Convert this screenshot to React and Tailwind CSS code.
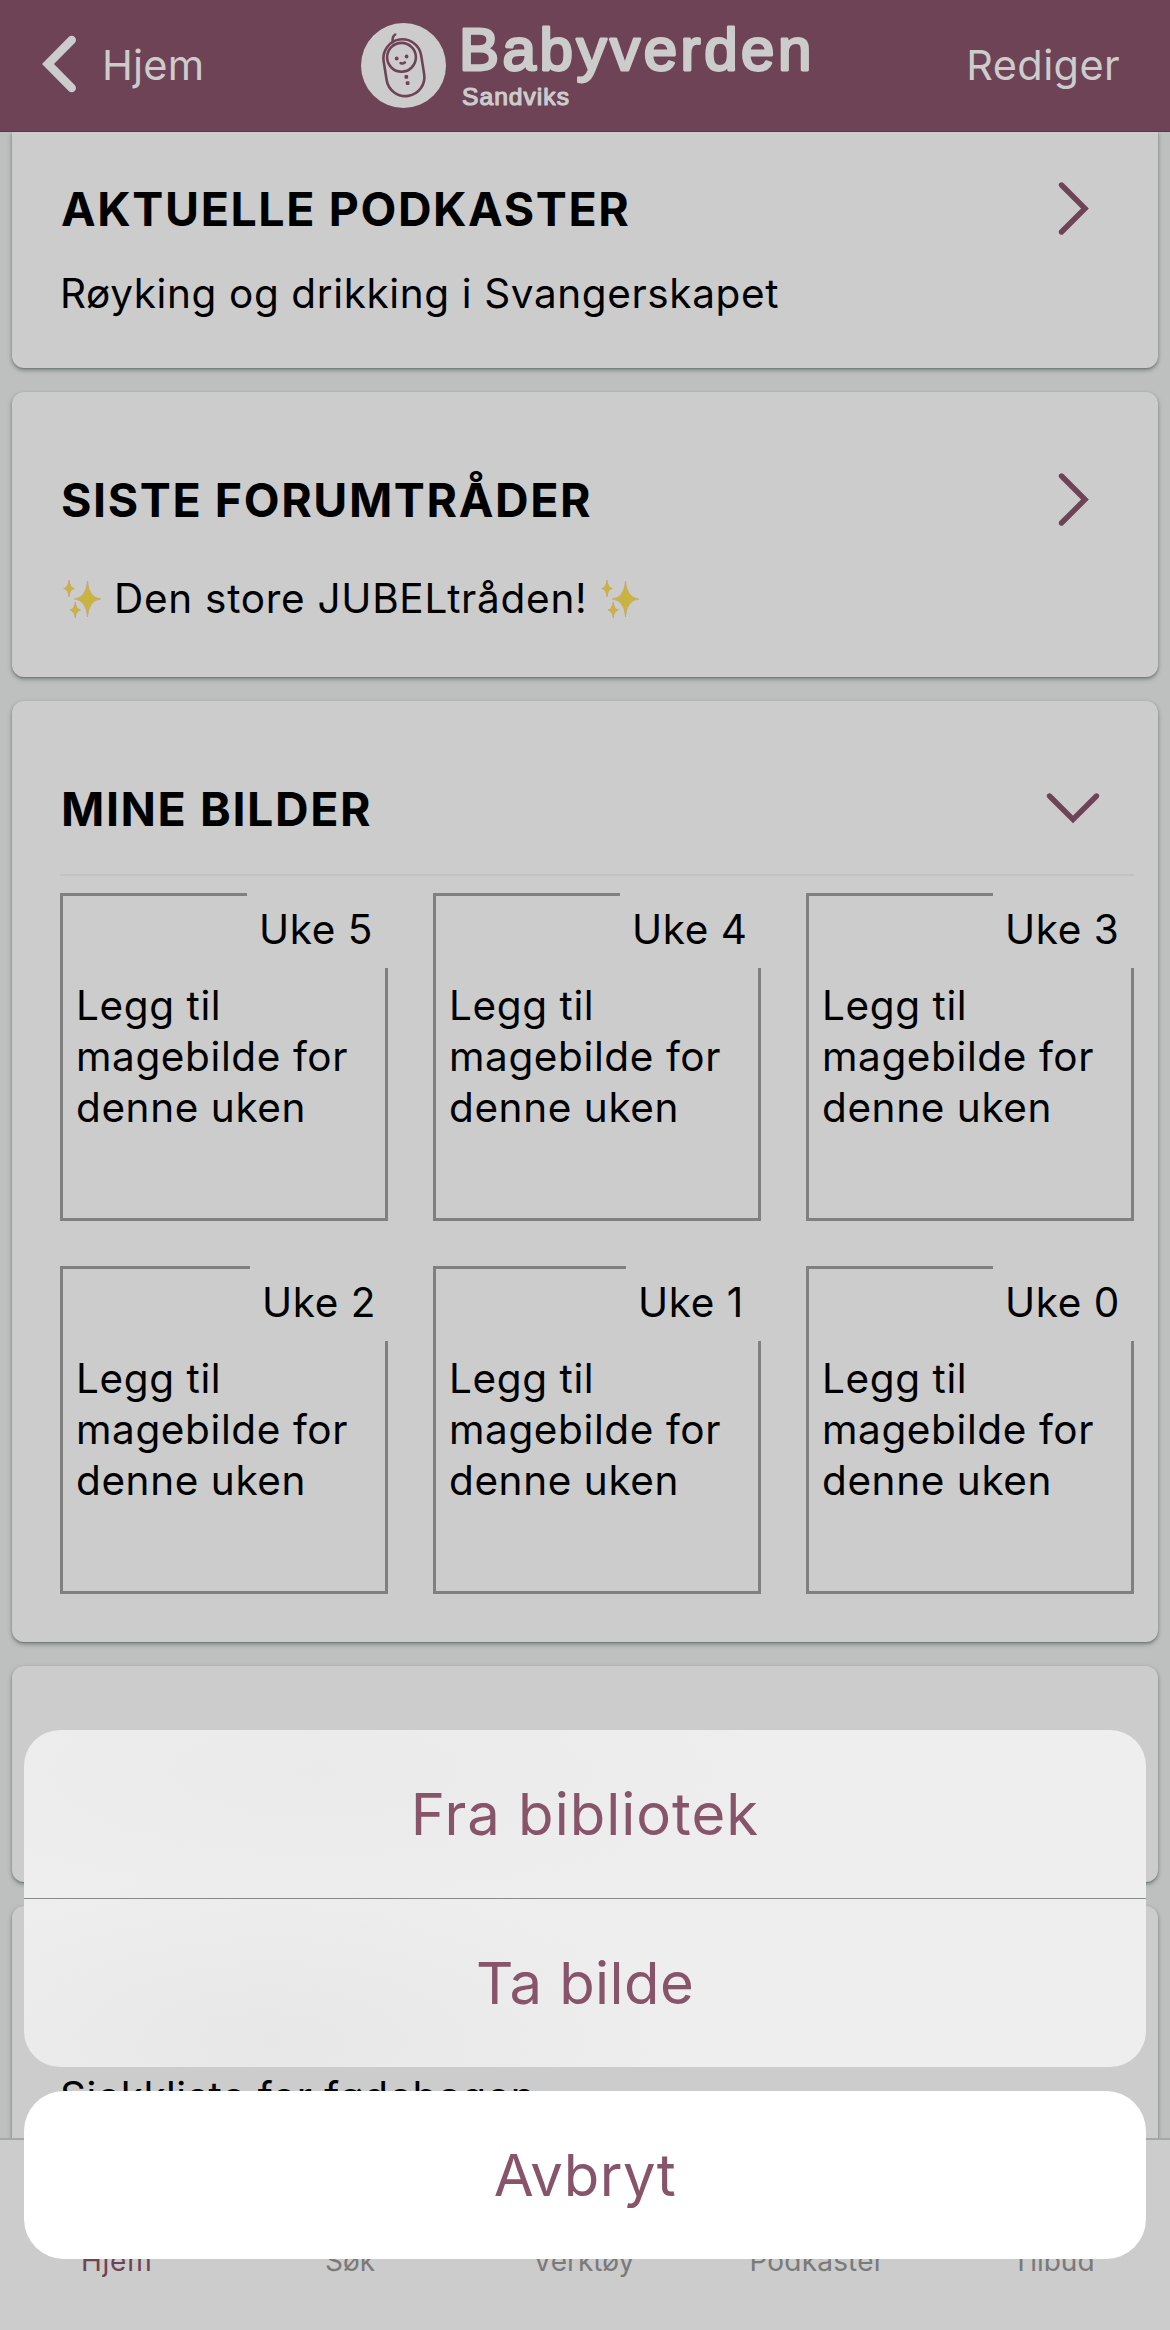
const WEEKS = [
  { week: 5, label: 'w-[141px]' },
  { week: 4, label: 'w-[141px]' },
  { week: 3, label: 'w-[141px]' },
  { week: 2, label: 'w-[138px]' },
  { week: 1, label: 'w-[135px]' },
  { week: 0, label: 'w-[141px]' },
];

const TABS = ['Hjem', 'Søk', 'Verktøy', 'Podkaster', 'Tilbud'];

function Logo() {
  return (
    <svg width="460" height="100" viewBox="0 0 460 100" fill="#cccccc">
      <circle cx="42.5" cy="50.5" r="42.5" />
      <g fill="none" stroke="#6d4355" strokeWidth="2.6" strokeLinecap="round">
        <rect x="23.9" y="24.2" width="38" height="57" rx="19" transform="rotate(-9 42.9 52.7)" />
        <circle cx="40.5" cy="42.3" r="14.4" />
        <path d="M34.2 19.5q-3.6 2.4-2.2 7.6" />
        <path d="M39.6 48.1q2.2 1 4.2-.6" />
      </g>
      <g fill="#6d4355">
        <circle cx="35.7" cy="43.5" r="1.9" />
        <circle cx="45.6" cy="41.5" r="1.9" />
        <rect x="43.5" y="60.1" width="3.6" height="3.6" rx="1" />
        <rect x="44.8" y="66.3" width="3.6" height="3.6" rx="1" />
      </g>
      <text x="98" y="54.5" fontFamily="Liberation Sans" fontSize="59" stroke="#cccccc" strokeWidth="2.8" strokeLinejoin="round" letterSpacing="3.5" textLength="356" lengthAdjust="spacingAndGlyphs">Babyverden</text>
      <text x="101" y="89.5" fontFamily="Liberation Sans" fontSize="24" stroke="#cccccc" strokeWidth="1.2" strokeLinejoin="round" letterSpacing="1" textLength="108" lengthAdjust="spacingAndGlyphs">Sandviks</text>
    </svg>
  );
}

function Sparkles({ className = '' }) {
  return (
    <svg width="46" height="50" viewBox="0 0 46 50" fill="#c9b43f" stroke="#c99a55" strokeWidth="0.6" className={className}>
      <path d="M27.5 7Q28.700 23.800 40.800 25Q28.700 26.200 27.500 43Q26.300 26.200 14.200 25Q26.300 23.800 27.500 7Z" />
      <path d="M27.500 17Q29 23.500 34 25Q29 26.500 27.500 33Q26 26.500 21 25Q26 23.500 27.500 17Z" stroke="none" />
      <path d="M9 6Q9.800 13.700 14.300 14.500Q9.800 15.300 9 23Q8.200 15.300 3.700 14.500Q8.200 13.700 9 6Z" />
      <path d="M15.200 28Q16 35.200 20.500 36Q16 36.800 15.200 44Q14.400 36.800 9.900 36Q14.400 35.200 15.200 28Z" />
    </svg>
  );
}

function Chevron({ down }) {
  return (
    <svg width="60" height="60" viewBox="0 0 60 60" fill="none" stroke="#6d4355" strokeWidth="5.4" strokeLinecap="round">
      {down ? <path d="M5.5 17 29 40.5 52.5 17" /> : <path d="M17.5 6 41 29.5 17.5 53" />}
    </svg>
  );
}

function Card({ className = '', children }) {
  return (
    <section className={`mx-3 shrink-0 bg-[#cccccc] pl-12 shadow-[0_2px_4px_rgba(70,80,76,0.6),0_1px_1px_rgba(90,100,96,0.3)] ${className}`}>
      {children}
    </section>
  );
}

function CardTitle({ title, down }) {
  return (
    <div className="flex h-[60px] items-center justify-between pr-[54px] pl-px">
      <h2 className="text-[46.5px] leading-[60px] font-bold tracking-[1.6px] whitespace-nowrap">{title}</h2>
      <Chevron down={down} />
    </div>
  );
}

function WeekTile({ week, label }) {
  return (
    <div className="relative h-[328px] border-[3px] border-[#808080] pt-[84px] pl-[13px] text-[40.5px] leading-[51px] tracking-[0.6px]">
      <span className={`absolute -top-[3px] -right-[3px] flex h-[75px] items-center bg-[#cccccc] pb-[2px] pl-3 whitespace-nowrap ${label}`}>
        Uke {week}
      </span>
      <p>Legg til<br />magebilde for<br />denne uken</p>
    </div>
  );
}

function ActionSheet() {
  return (
    <div className="absolute inset-x-6 bottom-[71px] flex flex-col gap-6 text-[58px] text-[#875469]">
      <div className="overflow-hidden rounded-[36px] bg-[#eeeeee] bg-[radial-gradient(ellipse_420px_170px_at_22%_92%,#e7e7e7,transparent),radial-gradient(ellipse_480px_150px_at_26%_12%,#eaeaea,transparent)]">
        <button className="block h-[169px] w-full border-b border-[#8a8a8a] tracking-[1px]">Fra bibliotek</button>
        <button className="block h-[168px] w-full tracking-[0.4px]">Ta bilde</button>
      </div>
      <button className="h-[168px] rounded-[40px] bg-white tracking-[0.5px]">Avbryt</button>
    </div>
  );
}

export default function App() {
  return (
    <div className="relative flex h-[2330px] w-[1170px] flex-col overflow-hidden bg-[#bdc0be] font-[Inter,sans-serif] text-black">
      <header className="z-10 flex h-[132px] shrink-0 items-center border-b border-[#5f3547] bg-[#6d4355] pb-px text-[41.5px] text-[#cccccc]">
        <div className="flex w-[361px] items-center pl-[36px]">
          <svg width="44" height="64" viewBox="0 0 44 64" fill="none" stroke="#cccccc" strokeWidth="8.5" strokeLinecap="round">
            <path d="M35.7 7 12 31 35.7 55" />
          </svg>
          <span className="ml-[22px] tracking-[0.2px]">Hjem</span>
        </div>
        <Logo />
        <span className="ml-auto pr-[50px] tracking-[0.38px]">Rediger</span>
      </header>

      <main className="flex min-h-0 flex-1 flex-col gap-6 overflow-hidden">
        <Card className="rounded-b-xl pt-[47px] pb-[49px]">
          <CardTitle title="AKTUELLE PODKASTER" />
          <p className="mt-[30px] text-[40.5px] leading-[50px] tracking-[0.61px]">Røyking og drikking i Svangerskapet</p>
        </Card>

        <Card className="rounded-xl pt-[78px] pb-[53px]">
          <CardTitle title="SISTE FORUMTRÅDER" />
          <p className="mt-[44px] flex h-[50px] items-center text-[40.5px] leading-[50px] tracking-[0.72px]">
            <Sparkles />
            <span className="ml-2">Den store JUBELtråden!</span>
            <Sparkles className="ml-[11px]" />
          </p>
        </Card>

        <Card className="rounded-xl pt-[78px] pr-6 pb-12">
          <div className="-mr-6"><CardTitle title="MINE BILDER" down /></div>
          <hr className="mt-[35px] border-t-2 border-[#c1c3c2]" />
          <div className="mt-[17px] grid grid-cols-3 gap-[45px]">
            {WEEKS.map((w) => <WeekTile key={w.week} {...w} />)}
          </div>
        </Card>

        <Card className="h-[216px] rounded-xl" />

        <Card className="h-[300px] rounded-xl pt-[166px]">
          <p className="text-[40.5px] leading-[50px] tracking-[0.45px]">Sjekkliste for fødebagen</p>
        </Card>
      </main>

      <nav className="z-10 flex h-[192px] shrink-0 border-t-2 border-[#a5a8a7] bg-[#cccccc] pt-[103px] text-[28px] leading-9 text-[#7a7a7a]">
        {TABS.map((tab, i) => (
          <span key={tab} className={`flex-1 text-center ${i === 0 ? 'tracking-[0.8px] text-[#6d4355]' : ''} ${tab === 'Podkaster' ? 'pr-[3px] tracking-[0.2px]' : ''}`}>{tab}</span>
        ))}
      </nav>

      <div className="absolute inset-0 z-20"><ActionSheet /></div>
    </div>
  );
}
